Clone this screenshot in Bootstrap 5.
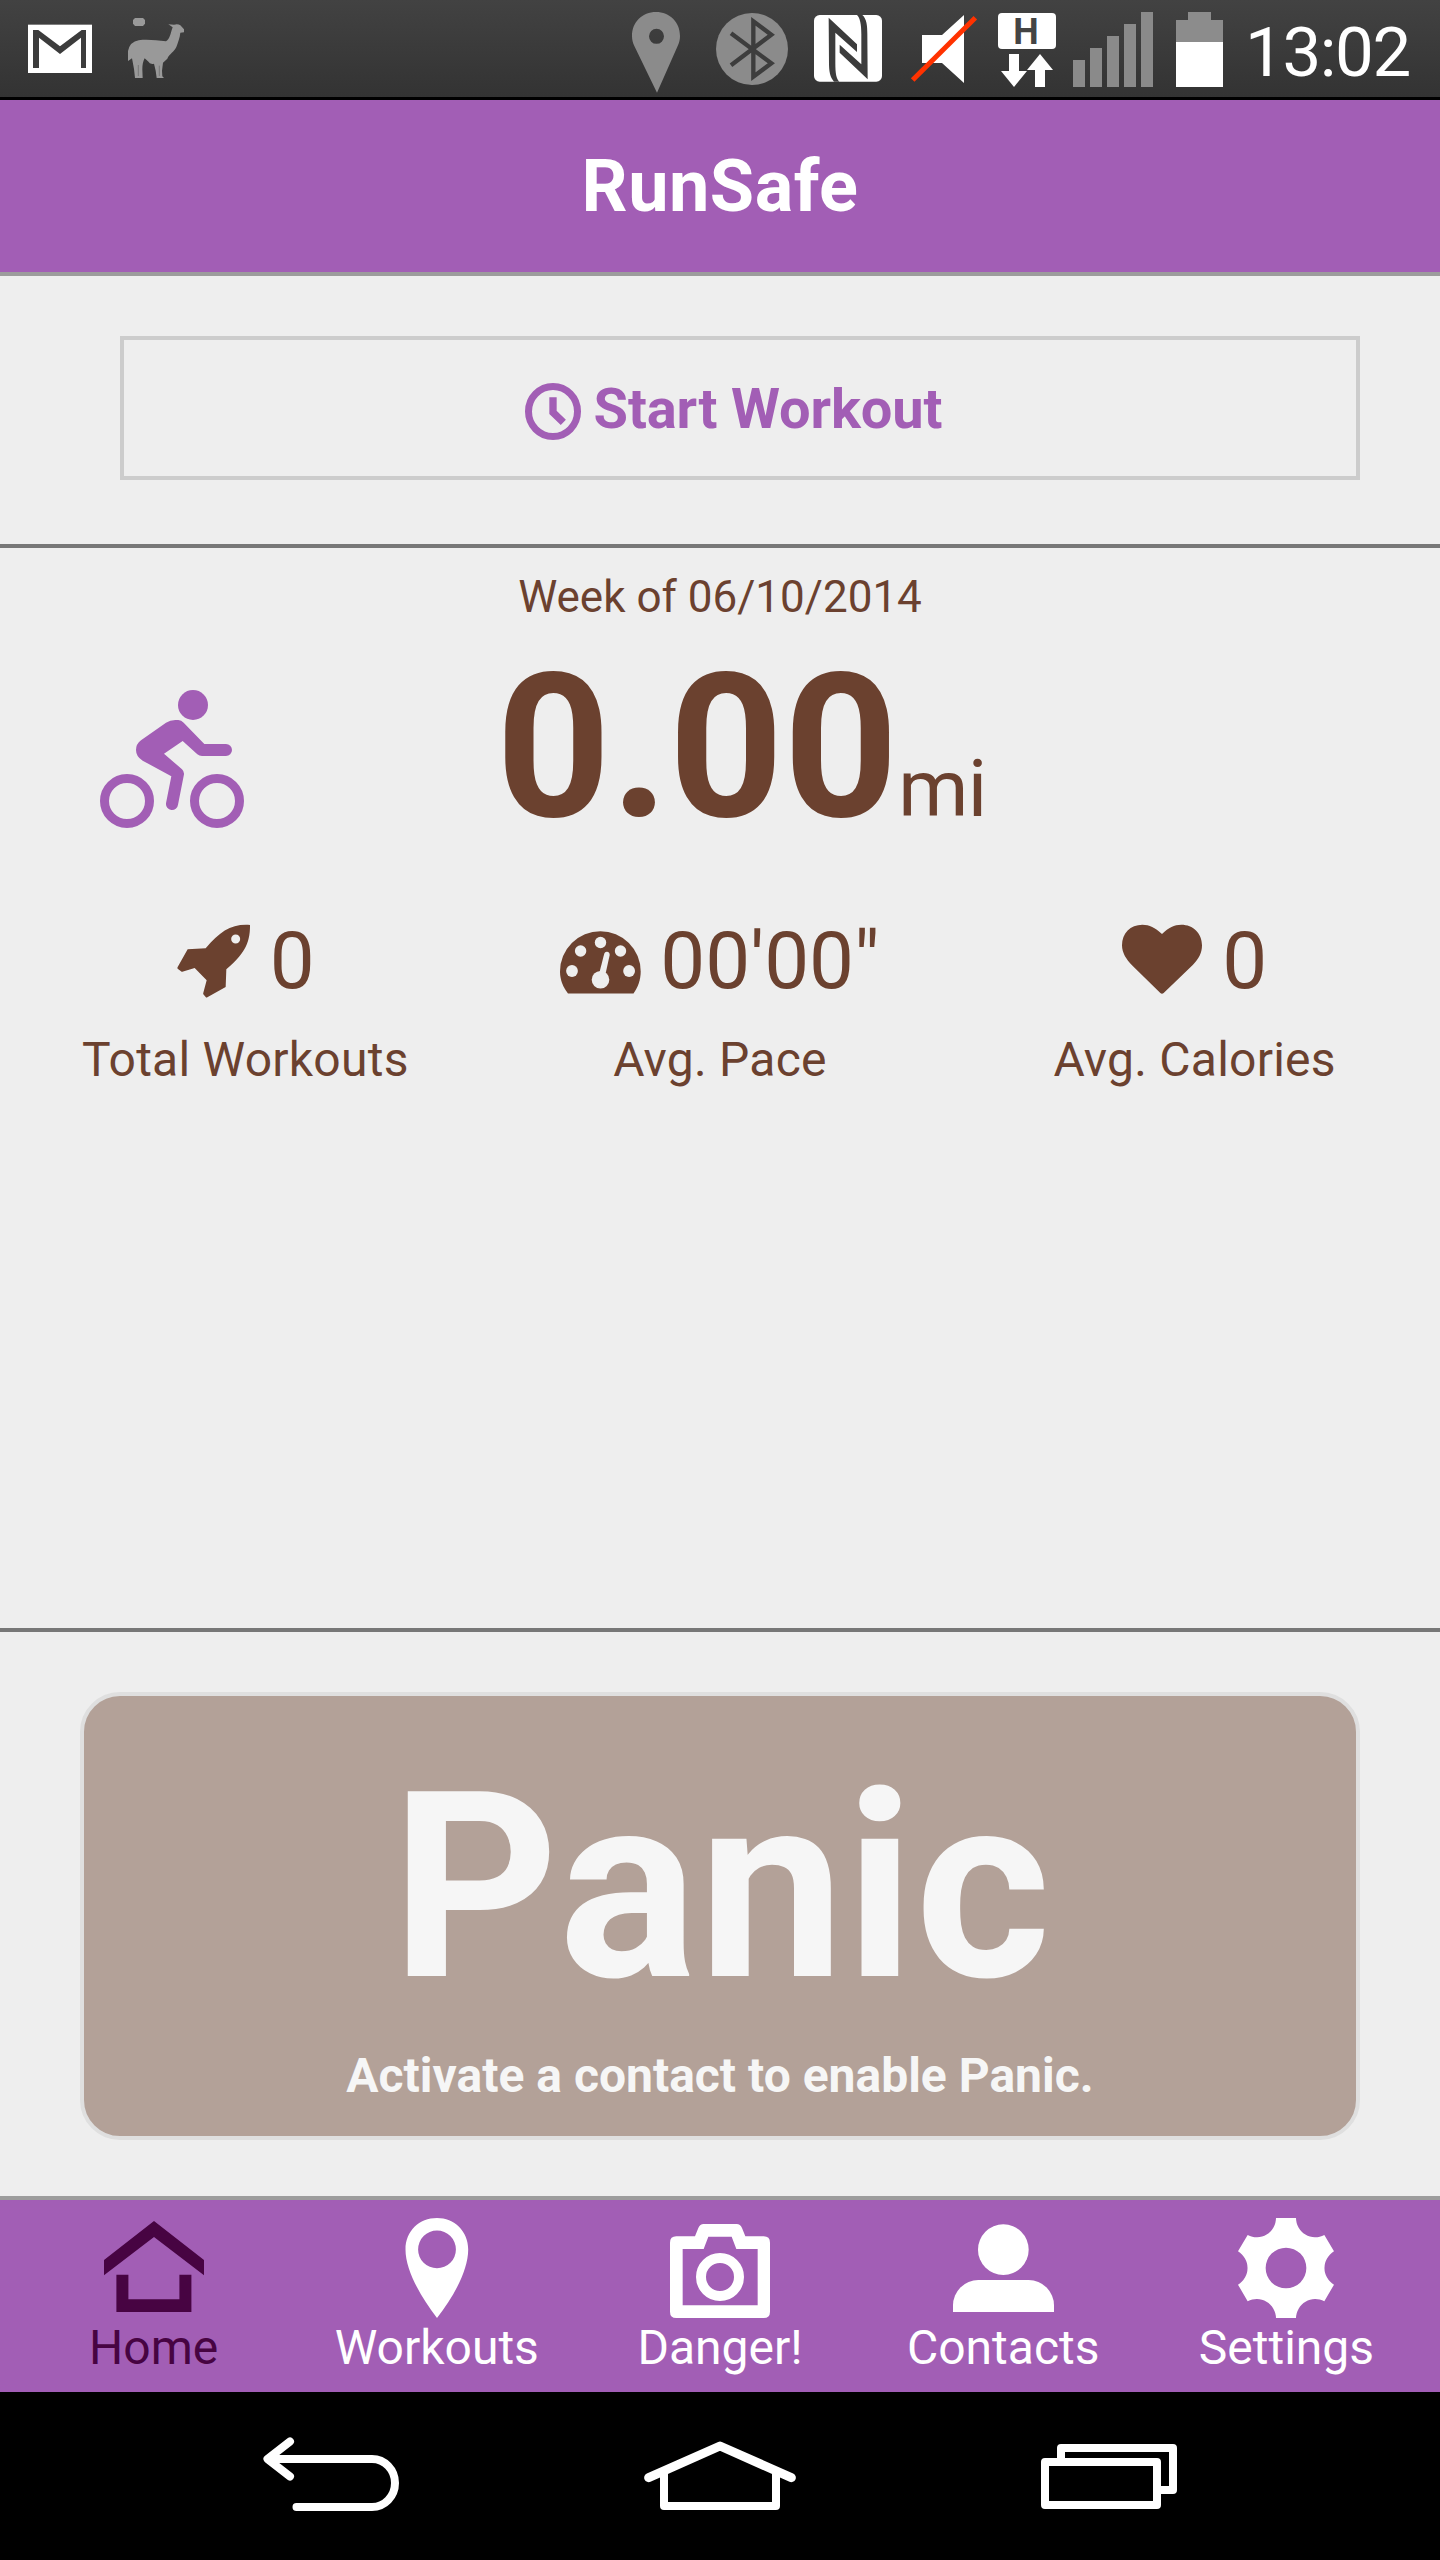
<!DOCTYPE html>
<html lang="en">
<head>
<meta charset="utf-8">
<meta name="viewport" content="width=device-width, initial-scale=1">
<title>RunSafe</title>
<link href="https://cdn.jsdelivr.net/npm/bootstrap@5.3.0/dist/css/bootstrap.min.css" rel="stylesheet">
<style>
  :root { --purple: #a25eb5; --brown: #6b412f; --plum: #470442; }
  body { width: 1440px; height: 2560px; background: #eee; color: var(--brown); font-family: Roboto, sans-serif; overflow: hidden; }
  svg { display: block; flex: none; }
  .status-bar { height: 100px; padding-left: 28px; background: linear-gradient(#424242, #333); border-bottom: 3px solid #000; color: #fff; }
  .mail-icon { margin-right: 36px; }
  .clock { width: 200px; height: 97px; padding-left: 5px; font-size: 69px; line-height: 105px; letter-spacing: -1.4px; }
  .title-bar { height: 176px; background: var(--purple); border-bottom: 4px solid #9c9c9c; }
  .title-bar h1 { font-size: 72px; line-height: 172px; padding-top: 1px; font-weight: 700; letter-spacing: .5px; color: #fff; }
  .start-area { height: 272px; padding: 60px 80px 0 120px; border-bottom: 4px solid #777; }
  .btn-start { height: 144px; border: 4px solid #ccc; border-radius: 0; color: var(--purple); font-size: 56px; font-weight: 700; line-height: 1; padding: 0 13px 0 0; }
  .btn-start svg { margin-right: 12px; }
  .btn-start span { padding-top: 2px; letter-spacing: -.1px; }
  .summary { height: 1084px; border-bottom: 4px solid #777; }
  .week { font-size: 44px; line-height: 60px; padding-top: 19px; }
  .distance { height: 286px; padding-left: 100px; }
  .bike { margin: 63px 252px 0 0; }
  .miles { font-size: 200px; font-weight: 700; line-height: 241px; }
  .unit { font-size: 80px; letter-spacing: -.6px; line-height: 1; }
  .stats { padding: 0 8px; }
  .stat-value { font-size: 80px; line-height: 96px; height: 96px; margin-bottom: 21px; }
  .stat-label { font-size: 48px; line-height: 60px; letter-spacing: .25px; }
  .panic-area { height: 564px; padding: 60px 80px 0; }
  .btn-panic, .btn-panic:disabled { height: 448px; border: 4px solid #dfdfdf; border-radius: 40px; background: #b3a198; color: #f6f6f6; padding: 41px 0 0; font-weight: 700; opacity: 1; }
  .panic-word { font-size: 260px; line-height: 300px; letter-spacing: 1px; padding-left: 3px; }
  .panic-hint { font-size: 48px; line-height: 60px; margin-top: 9px; }
  .tab-bar { height: 196px; border-top: 4px solid #9c9c9c; background: var(--purple); padding: 16px 12px 0; }
  .tab-bar a { color: #fff; font-size: 48px; line-height: 55px; text-decoration: none; }
  .tab-bar a.current { color: var(--plum); }
  .system-bar { height: 168px; background: #000; padding: 0 258px 0 256px; }
</style>
</head>
<body>

<div class="status-bar d-flex align-items-start">
  <svg class="mail-icon" width="64" height="97" viewBox="84 0 192 291">
    <rect x="84" y="74" width="192" height="145" fill="#fff"/>
    <path d="M99 204V90H115L180 139 245 90H258V204H243V113L180 162 117 113V204Z" fill="#3c3c3c"/>
  </svg>
  <svg width="56" height="97" viewBox="384 0 168 291" fill="#999">
    <path d="M405 54H429L435 60V71L429 78H405L399 71V60Z"/>
    <path d="M505 73L522 74Q533 70 541 76L552 88V97L541 98C540 112 533 130 529 141C524 154 507 163 502 176L489 188L486 212L487 229L492 234H470L467 212L462 191Q450 194 444 184L434 175Q427 187 427 208L428 234H405L402 207L396 175L384 183V153Q390 125 416 121C445 117 470 122 498 124C510 118 511 101 518 82Z"/>
    <path d="M415 195V228M478 197V228" stroke="#666" stroke-width="2"/>
  </svg>
  <div class="d-flex ms-auto">
    <svg width="68" height="97" viewBox="96 0 204 291">
      <path fill="#8b8b8b" fill-rule="evenodd" d="M171 278L103 138C98 128 96 118 96 108C96 66 127 36 168 36C209 36 240 66 240 108C240 118 238 128 233 138ZM169.500 86.500A22.500 22.500 0 1 0 169.500 131.500A22.500 22.500 0 1 0 169.500 86.500Z"/>
    </svg>
    <svg width="100" height="97" viewBox="300 0 300 291">
      <circle cx="456" cy="147" r="108" fill="#8b8b8b"/>
      <path d="M393 100L514 190 460 230V64L514 104 393 196" fill="none" stroke="#3d3d3d" stroke-width="13"/>
    </svg>
    <svg width="96" height="97" viewBox="600 0 288 291">
      <rect x="642" y="45" width="204" height="200" rx="17" fill="#fff"/>
      <path fill="#3c3c3c" d="M686 53L771 133V156L706 98V190C706 220 709 237 718 245H702C690 232 687 213 687 190ZM803 238L719 158V134L784 193V103C784 72 780 54 771 45H787C800 57 802 76 802 103Z"/>
    </svg>
    <svg width="92" height="97" viewBox="888 0 276 291">
      <path fill="#fff" d="M966 105H1026L1092 45V249L1026 189H966Z"/>
      <path d="M938 240L1126 53" stroke="#ff3200" stroke-width="15"/>
    </svg>
    <svg width="76" height="97" viewBox="1164 0 228 291" fill="#fff">
      <rect x="1194" y="39" width="174" height="108" rx="12"/>
      <text x="1278" y="131" text-anchor="middle" font-family="Roboto, sans-serif" font-weight="700" font-size="108" fill="#444">H</text>
      <path d="M1227 162H1257V213H1281L1242 261 1203 213H1227ZM1320 162L1359 210H1335V261H1305V210H1281Z"/>
    </svg>
    <svg width="100" height="97" viewBox="132 0 300 291" fill="#8a8a8a">
      <path d="M159 180H195V261H159ZM210 144H246V261H210ZM261 108H297V261H261ZM312 72H348V261H312ZM363 36H399V261H363Z"/>
    </svg>
    <svg width="76" height="97" viewBox="432 0 228 291">
      <path fill="#8c8c8c" d="M504 36H573V60H609V126H468V60H504Z"/>
      <path fill="#fff" d="M468 126H609V261H468Z"/>
    </svg>
    <div class="clock">13:02</div>
  </div>
</div>

<header class="title-bar text-center">
  <h1 class="m-0">RunSafe</h1>
</header>

<section class="start-area">
  <button type="button" class="btn btn-start w-100 d-flex align-items-center justify-content-center">
    <svg width="57" height="72" viewBox="135 156 171 216" fill="none" stroke="currentColor">
      <ellipse cx="219" cy="274.500" rx="73.500" ry="75" stroke-width="21"/>
      <path d="M219 232V277L250 307" stroke-width="22"/>
    </svg>
    <span>Start Workout</span>
  </button>
</section>

<main class="summary">
  <div class="week text-center">Week of 06/10/2014</div>
  <div class="distance d-flex align-items-start">
    <svg class="bike" width="144" height="140" viewBox="120 150 432 420" fill="#a25eb5">
      <circle cx="399" cy="195" r="45"/>
      <g fill="none" stroke="#a25eb5" stroke-width="27"><circle cx="201" cy="483" r="67.500"/><circle cx="471" cy="483" r="67.500"/></g>
      <path d="M318 248Q330 240 346 240H355Q364 240 371 248L433 312H498A18 18 0 0 1 498 348H426Q418 348 412 343L368 303 312 341 366 388Q373 395 372 403L354 494A18 18 0 0 1 318 490L334 409 248 362Q228 350 228 330Q228 312 243 301Z"/>
    </svg>
    <div class="d-flex align-items-baseline">
      <span class="miles">0.00</span><span class="unit">mi</span>
    </div>
  </div>
  <div class="stats row g-0 text-center">
    <div class="col-4">
      <div class="stat-value d-flex align-items-center justify-content-center">
        <svg width="94" height="76" viewBox="348 850 282 228" fill="currentColor">
          <path fill-rule="evenodd" d="M570 856C571 915 548 947 499 989L497 1042 442 1073Q439 1075 437 1072L430 1064Q429 1062 430 1059L440 1022 404 985 367 996Q364 997 362 994L353 987Q351 985 353 982L383 929 437 926C480 875 515 852 570 856ZM527 884.500A13.500 13.500 0 1 0 527 911.500A13.500 13.500 0 1 0 527 884.500Z"/>
        </svg>
        <span>0</span>
      </div>
      <div class="stat-label">Total Workouts</div>
    </div>
    <div class="col-4">
      <div class="stat-value d-flex align-items-center justify-content-center">
        <svg width="100" height="76" viewBox="560 923 100 76">
          <path fill="currentColor" d="M568 993.500C563 987 560 980 560 971.500A40.300 40.300 0 0 1 640.700 971.500C640.700 980 638 987 633.500 993.500Z"/>
          <g fill="#eee"><circle cx="600.500" cy="942.500" r="5.700"/><circle cx="580.600" cy="951" r="5.700"/><circle cx="620.500" cy="951" r="5.700"/><circle cx="572" cy="971" r="5.900"/><circle cx="629.100" cy="971" r="5.900"/><circle cx="600.500" cy="979.700" r="8.800"/>
          <path d="M599.300 973L604.300 953.500Q605 951.500 607 951.700Q609.800 952 609.700 955L605.500 974Z"/></g>
        </svg>
        <span>00'00"</span>
      </div>
      <div class="stat-label">Avg. Pace</div>
    </div>
    <div class="col-4">
      <div class="stat-value d-flex align-items-center justify-content-center">
        <svg width="100" height="76" viewBox="367 130 300 228" fill="currentColor">
          <path d="M487 163C465 143 450 135 428 135C392 135 367 160 367 197C367 220 380 239 397 257L482 340Q487 344 492 340L580 255C597 238 607 220 607 197C607 160 580 135 545 135C523 135 508 143 487 163Z"/>
        </svg>
        <span>0</span>
      </div>
      <div class="stat-label">Avg. Calories</div>
    </div>
  </div>
</main>

<section class="panic-area">
  <button type="button" class="btn btn-panic w-100 d-flex flex-column align-items-center" disabled>
    <span class="panic-word">Panic</span>
    <span class="panic-hint">Activate a contact to enable Panic.</span>
  </button>
</section>

<nav class="tab-bar row g-0 text-center">
  <a class="col current" href="#">
    <svg class="mx-auto" width="100" height="104" viewBox="103.600 2216 100 104" fill="currentColor">
      <path d="M153.600 2221L203.600 2260V2275.300L153.600 2237 103.600 2275.300V2260ZM116 2274.700H128V2299.300H179V2274.700H191V2312H116Z"/>
    </svg>
    <div>Home</div>
  </a>
  <a class="col" href="#">
    <svg class="mx-auto" width="100" height="104" viewBox="386.800 2216 100 104" fill="currentColor">
      <path fill-rule="evenodd" d="M436.800 2218C419 2218 405.300 2231 405.300 2249.500C405.300 2270 420 2296 436.800 2318C454 2296 468 2270 468 2249.500C468 2231 454 2218 436.800 2218ZM436.800 2230.500A18.900 18.900 0 1 1 436.800 2268.300A18.900 18.900 0 1 1 436.800 2230.500Z"/>
    </svg>
    <div>Workouts</div>
  </a>
  <a class="col" href="#">
    <svg class="mx-auto" width="100" height="104" viewBox="390 108 300 312" fill="currentColor">
      <path fill-rule="evenodd" d="M409 169H465L475 144Q480 132 491 132H590Q601 132 606 144L616 169H671Q690 169 690 188V395Q690 414 671 414H409Q390 414 390 395V188Q390 169 409 169ZM428 207V376H653V207H589L575 170H505L491 207Z"/>
      <circle cx="540" cy="291" r="57" fill="none" stroke="currentColor" stroke-width="30"/>
    </svg>
    <div>Danger!</div>
  </a>
  <a class="col" href="#">
    <svg class="mx-auto" width="101" height="104" viewBox="1239 108 303 312" fill="currentColor">
      <circle cx="1390" cy="209" r="76"/>
      <path d="M1239 396V376A76 76 0 0 1 1315 300H1466A76 76 0 0 1 1542 376V396Z"/>
    </svg>
    <div>Contacts</div>
  </a>
  <a class="col" href="#">
    <svg class="mx-auto" width="100" height="104" viewBox="709 108 300 312" fill="currentColor">
      <path fill-rule="evenodd" d="M829 114H889A58 58 0 0 0 974 165L1003 214A58 58 0 0 0 1003 314L974 364A58 58 0 0 0 889 414H829A58 58 0 0 0 744 364L715 314A58 58 0 0 0 715 214L744 165A58 58 0 0 0 829 114ZM859 203A61 61 0 1 0 859 325A61 61 0 1 0 859 203Z"/>
    </svg>
    <div>Settings</div>
  </a>
</nav>

<div class="system-bar d-flex justify-content-between">
  <svg width="150" height="168" viewBox="256 2392 150 168" fill="none" stroke="#fff" stroke-width="8" stroke-linejoin="round" stroke-linecap="round">
    <path d="M270 2459H372A23 24 0 0 1 372 2507H296.500M290 2441.500L267.500 2459 290 2476.500"/>
  </svg>
  <svg width="160" height="168" viewBox="303 636 480 504" fill="none" stroke="#fff" stroke-linejoin="round">
    <path d="M326 893L540 798 754 893" stroke-width="27" stroke-linecap="round"/>
    <path d="M372 880V978H708V880" stroke-width="24"/>
  </svg>
  <svg width="146" height="168" viewBox="108 636 438 504" fill="none" stroke="#fff" stroke-width="24" stroke-linejoin="round">
    <path d="M183 840V804H519V930H480"/>
    <path d="M135 846H471V975H135Z"/>
  </svg>
</div>

<script src="https://cdn.jsdelivr.net/npm/bootstrap@5.3.0/dist/js/bootstrap.bundle.min.js"></script>
</body>
</html>
